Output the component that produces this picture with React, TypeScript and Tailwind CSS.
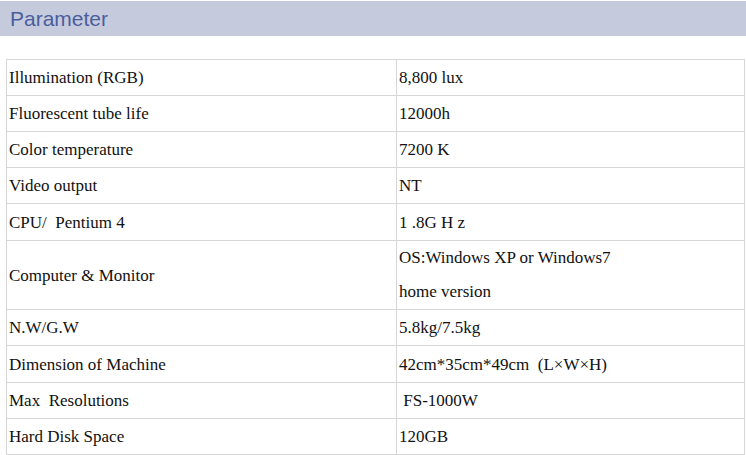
import React from "react";

const rows: { k: string; v: React.ReactNode; h: string }[] = [
  { k: "Illumination (RGB)", v: "8,800 lux", h: "h-[36px]" },
  { k: "Fluorescent tube life", v: "12000h", h: "h-[36px]" },
  { k: "Color temperature", v: "7200 K", h: "h-[36px]" },
  { k: "Video output", v: "NT", h: "h-[36px]" },
  { k: "CPU/\u00a0 Pentium 4", v: "1 .8G H z", h: "h-[37px]" },
  {
    k: "Computer & Monitor",
    v: (
      <div className="flex flex-col">
        <div className="h-[34px] leading-[34px]">OS:Windows XP or Windows7</div>
        <div className="h-[34px] leading-[34px]">home version</div>
      </div>
    ),
    h: "h-[68px]",
  },
  { k: "N.W/G.W", v: "5.8kg/7.5kg", h: "h-[36px]" },
  { k: "Dimension of Machine", v: "42cm*35cm*49cm\u00a0 (L×W×H)", h: "h-[37px]" },
  { k: "Max\u00a0 Resolutions", v: "\u00a0FS-1000W", h: "h-[36px]" },
  { k: "Hard Disk Space", v: "120GB", h: "h-[36px]" },
];

export default function App() {
  return (
    <div className="w-[746px] h-[455px] bg-white overflow-hidden">
      <div className="mt-px h-[35px] bg-[#c5cbdd] flex items-center pl-[10px]">
        <span
          className="text-[21px] text-[#4b5e9c]"
          style={{ fontFamily: '"Liberation Sans", Arial, sans-serif' }}
        >
          Parameter
        </span>
      </div>
      <div className="pt-[23px] pl-[6px]">
        <table
          className="w-[739px] border-collapse text-[17px] text-[#111]"
          style={{ fontFamily: '"Liberation Serif", "Times New Roman", serif' }}
        >
          <tbody>
            {rows.map((r, i) => (
              <tr key={i} className={r.h}>
                <td className="w-[390px] border border-[#d6d6d6] pl-[2px] align-middle leading-none">
                  {r.k}
                </td>
                <td className="border border-[#d6d6d6] pl-[2px] align-middle leading-none">
                  {r.v}
                </td>
              </tr>
            ))}
          </tbody>
        </table>
      </div>
    </div>
  );
}
